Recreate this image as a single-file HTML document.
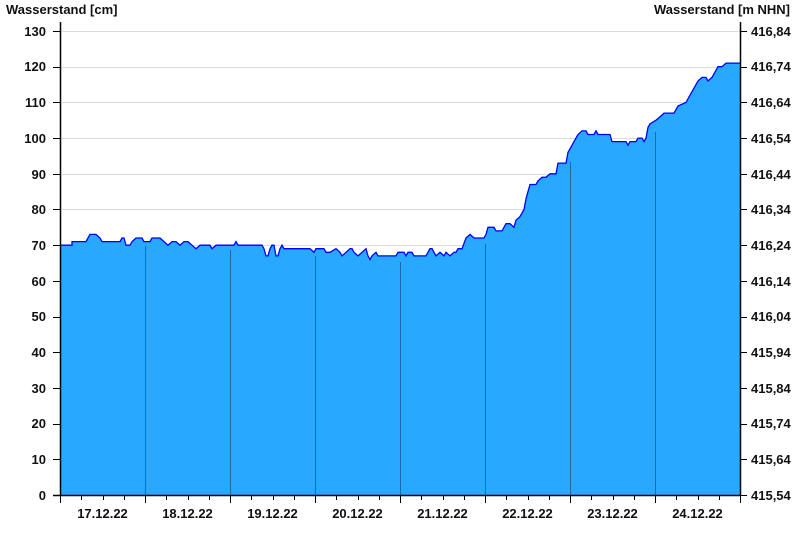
<!DOCTYPE html>
<html><head><meta charset="utf-8"><style>
html,body{margin:0;padding:0;background:#fff;width:800px;height:550px;overflow:hidden}
svg text{font-family:"Liberation Sans",Arial,sans-serif;font-weight:bold;font-size:13px;fill:#111}
</style></head><body>
<svg id="s" width="800" height="550" xmlns="http://www.w3.org/2000/svg">
<g stroke="#dcdcdc" stroke-width="1" id="grid"></g>
<polygon id="fill" fill="#29A8FF" stroke="none" points=""/>
<g stroke="#1e6aa0" stroke-width="1">
<line x1="145.5" y1="246" x2="145.5" y2="495"/><line x1="230.5" y1="250" x2="230.5" y2="495"/>
<line x1="315.5" y1="256" x2="315.5" y2="495"/><line x1="400.5" y1="262" x2="400.5" y2="495"/>
<line x1="485.5" y1="244" x2="485.5" y2="495"/><line x1="570.5" y1="162" x2="570.5" y2="495"/>
<line x1="655.5" y1="132" x2="655.5" y2="495"/>
</g>
<polyline id="line" fill="none" stroke="#0000ff" stroke-width="1.3" points=""/>
<g stroke="#000" stroke-width="1.5" id="axes">
<line x1="60.5" y1="22" x2="60.5" y2="496"/>
<line x1="740.5" y1="22" x2="740.5" y2="496"/>
<line x1="53" y1="495.5" x2="741" y2="495.5"/>
</g>
<g stroke="#000" stroke-width="1" id="ticks"></g>
<text x="6" y="14">Wasserstand [cm]</text>
<text x="790" y="14" text-anchor="end">Wasserstand [m NHN]</text>
<g text-anchor="end">
<text x="46" y="500">0</text><text x="46" y="464">10</text><text x="46" y="428">20</text>
<text x="46" y="393">30</text><text x="46" y="357">40</text><text x="46" y="321">50</text>
<text x="46" y="286">60</text><text x="46" y="250">70</text><text x="46" y="214">80</text>
<text x="46" y="179">90</text><text x="46" y="143">100</text><text x="46" y="107">110</text>
<text x="46" y="71">120</text><text x="46" y="36">130</text>
</g>
<g>
<text x="751" y="500">415,54</text><text x="751" y="464">415,64</text><text x="751" y="428">415,74</text>
<text x="751" y="393">415,84</text><text x="751" y="357">415,94</text><text x="751" y="321">416,04</text>
<text x="751" y="286">416,14</text><text x="751" y="250">416,24</text><text x="751" y="214">416,34</text>
<text x="751" y="179">416,44</text><text x="751" y="143">416,54</text><text x="751" y="107">416,64</text>
<text x="751" y="71">416,74</text><text x="751" y="36">416,84</text>
</g>
<g text-anchor="middle">
<text x="102.5" y="518">17.12.22</text><text x="187.5" y="518">18.12.22</text>
<text x="272.5" y="518">19.12.22</text><text x="357.5" y="518">20.12.22</text>
<text x="442.5" y="518">21.12.22</text><text x="527.5" y="518">22.12.22</text>
<text x="612.5" y="518">23.12.22</text><text x="697.5" y="518">24.12.22</text>
</g>
</svg>
<script>
var d=[60,70,72,70,72,71,86,71,88,72,90,73,96,73,100,72,102,71,120,71,122,72,124,72,126,70,130,70,132,71,136,72,142,72,144,71,150,71,152,72,160,72,164,71,168,70,172,71,176,71,180,70,184,71,188,71,192,70,196,69,200,70,210,70,212,69,216,70,234,70,236,71,238,70,262,70,264,69,266,67,268,67,270,69,272,70,274,70,276,67,278,67,280,69,282,70,284,69,310,69,314,68,316,69,324,69,326,68,330,68,336,69,340,68,342,67,346,68,350,69,352,69,354,68,358,67,362,68,366,69,368,67,370,66,372,67,376,68,378,67,396,67,398,68,404,68,406,67,408,68,412,68,414,67,426,67,430,69,432,69,434,68,436,67,440,68,444,67,446,68,450,67,454,68,456,68,458,69,462,69,466,72,470,73,474,72,484,72,486,73,488,75,494,75,496,74,502,74,504,75,506,76,510,76,514,75,516,77,520,78,524,80,526,83,528,85,530,87,536,87,538,88,542,89,546,89,550,90,556,90,558,93,566,93,568,96,572,98,574,99,578,101,582,102,586,102,588,101,594,101,596,102,598,101,610,101,612,99,626,99,628,98,630,99,636,99,638,100,642,100,644,99,646,100,648,103,650,104,656,105,660,106,664,107,674,107,678,109,686,110,690,112,694,114,698,116,702,117,706,117,708,116,712,117,714,118,718,120,722,120,726,121,740,121];
var k=3.5692,pts=[];
for(var i=0;i<d.length;i+=2){pts.push(d[i]+","+(495-d[i+1]*k).toFixed(1));}
document.getElementById("line").setAttribute("points",pts.join(" "));
document.getElementById("fill").setAttribute("points",pts.join(" ")+" 740,495 60,495");
var g=document.getElementById("grid"),t=document.getElementById("ticks"),ns="http://www.w3.org/2000/svg";
function L(p,x1,y1,x2,y2){var l=document.createElementNS(ns,"line");l.setAttribute("x1",x1);l.setAttribute("y1",y1);l.setAttribute("x2",x2);l.setAttribute("y2",y2);p.appendChild(l);}
for(var v=10;v<=130;v+=10){var y=Math.round(495-v*k)+0.5;L(g,61,y,740,y);}
for(var v=0;v<=130;v+=10){var y=Math.round(495-v*k)+0.5;L(t,53,y,60,y);L(t,741,y,747,y);}
for(var x=60;x<=740;x+=21.25){var xx=Math.round(x)+0.5;var day=Math.abs((x-60)%85)<0.1;L(t,xx,495,xx,day?503:500);}
</script>
</body></html>
